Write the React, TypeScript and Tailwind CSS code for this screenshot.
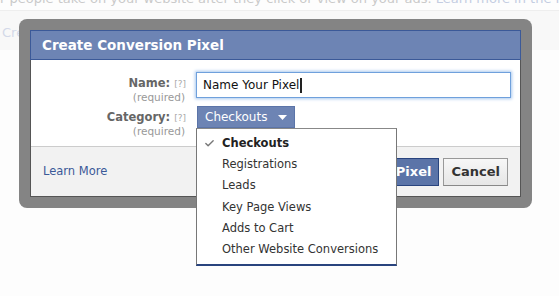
import { Check } from "lucide-react";

const items = [
  "Checkouts",
  "Registrations",
  "Leads",
  "Key Page Views",
  "Adds to Cart",
  "Other Website Conversions",
];

function FieldLabel({ name }: { name: string }) {
  return (
    <div className="w-[155px] shrink-0 text-right leading-none">
      <div className="pt-[2px]">
        <span className="text-[11.5px] font-bold text-[#666]">{name}:</span>
        <span className="ml-[4px] text-[9px] text-[#aaa]">[?]</span>
      </div>
      <div className="mr-[1px] mt-[2px] text-[10.5px] text-[#999]">(required)</div>
    </div>
  );
}

export default function App() {
  return (
    <div className="relative h-[296px] w-[559px] overflow-hidden bg-[#fdfdfd] font-['DejaVu_Sans',sans-serif]">
      {/* faded page behind the dialog */}
      <div className="h-[11px] overflow-hidden border-b border-[#eee]">
        <p className="-mt-[9px] whitespace-nowrap text-[13px] leading-[16px] text-[#cacaca]">
          r people take on your website after they click or view on your ads.{" "}
          <span className="text-[#c4cde2]">Learn more in the Help Center</span>
        </p>
      </div>
      <div className="h-[39px] bg-[#f8f8f8] pl-[2px] pt-[12px] text-[13px] text-[#d3d9e8]">
        Create conversion pixel
      </div>

      {/* dialog */}
      <div className="absolute left-[19px] top-[19px] w-[513px] rounded-[8px] bg-[#848484] p-[11px]">
        <div className="flex h-[30px] items-center border border-[#3b5998] bg-[#6d84b4] pl-[11px] text-[13.5px] font-bold text-white">
          Create Conversion Pixel
        </div>
        <div className="border-x border-b border-[#555]">
          <div className="flex h-[86px] flex-col gap-[8px] bg-white pt-[12px]">
            <div className="flex h-[26px] gap-[10px]">
              <FieldLabel name="Name" />
              <div className="flex h-[26px] w-[315px] items-center border border-[#6fa0dc] pl-[6px] text-[12px] text-[#111] shadow-[0_0_3px_1px_#a9c8ee]">
                Name Your Pixel
                <span className="ml-[1px] h-[15px] w-[2px] bg-[#222]" />
              </div>
            </div>
            <div className="flex h-[22px] gap-[10px]">
              <FieldLabel name="Category" />
              <div className="relative ml-[1px]">
                <div className="flex h-[22px] w-[98px] items-center gap-[11px] border border-[#5b74a8] bg-[#6d84b4] pl-[7px] text-[12px] text-white">
                  Checkouts
                  <svg width="9" height="5" viewBox="0 0 9 5">
                    <path d="M0 0h9L4.5 5z" fill="#fff" />
                  </svg>
                </div>
                <div className="absolute left-[-1px] top-[22px] z-10 w-[201px] border-x border-t border-b-2 border-x-[#777] border-t-[#888] border-b-[#29447e] bg-white pb-[4px] pt-[4px] text-[11.5px] text-[#333]">
                  {items.map((item, i) => (
                    <div key={item} className="flex h-[21.2px] items-center">
                      <span className="flex w-[25px] justify-end pr-[7px]">
                        {i === 0 && <Check size={11} strokeWidth={3} className="text-[#777]" />}
                      </span>
                      <span className={i === 0 ? "font-bold text-[#222]" : ""}>{item}</span>
                    </div>
                  ))}
                </div>
              </div>
            </div>
          </div>
          <div className="flex h-[50px] items-center justify-between border-t border-[#ccc] bg-[#f2f2f2] pl-[12px] pr-[12px]">
            <a className="text-[11.5px] text-[#3b5998]">Learn More</a>
            <div className="flex gap-[4px]">
              <button className="h-[28px] border border-[#29447e] bg-[#5b74a8] px-[7px] text-[13px] font-bold text-white">
                Create Pixel
              </button>
              <button className="h-[28px] border border-[#999] border-b-[#888] bg-gradient-to-b from-[#f7f7f7] to-[#e6e6e6] px-[7px] text-[13px] font-bold text-[#333]">
                Cancel
              </button>
            </div>
          </div>
        </div>
      </div>
    </div>
  );
}
